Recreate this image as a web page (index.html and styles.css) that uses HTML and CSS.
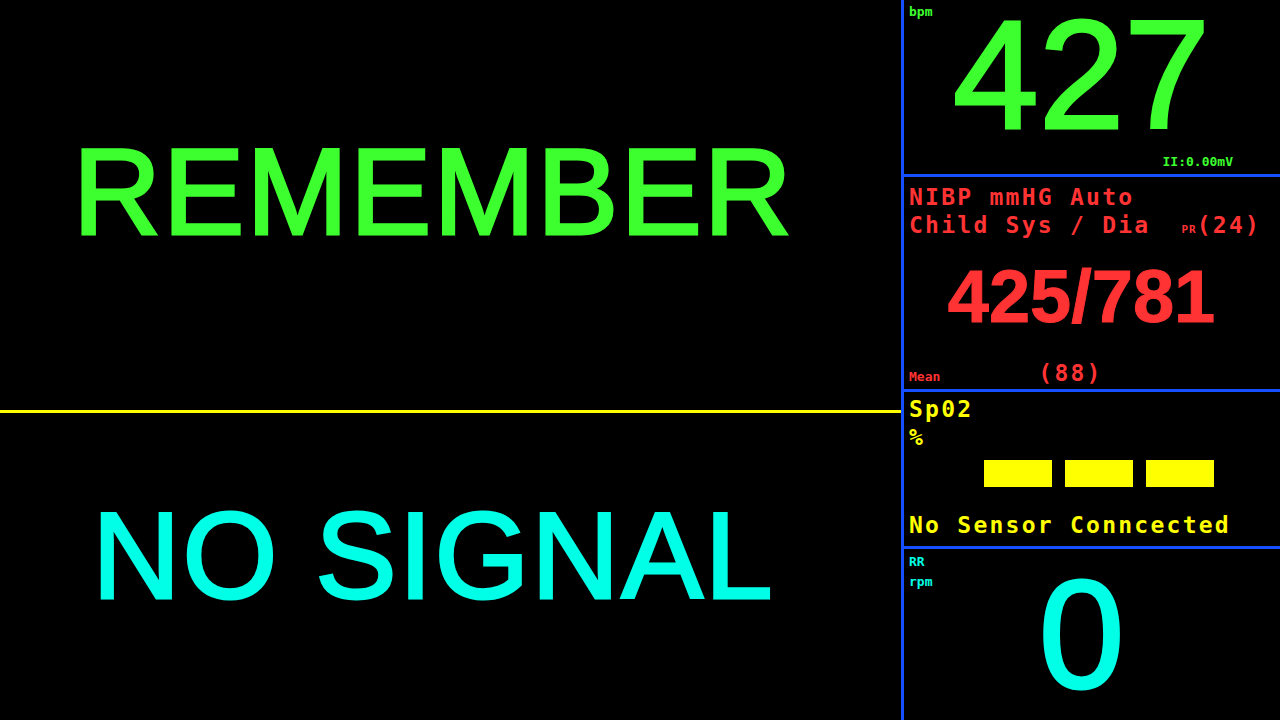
FILE: index.html
```html
<!DOCTYPE html>
<html lang="en">
<head>
<meta charset="utf-8">
<title>Patient Monitor</title>
<link rel="stylesheet" href="styles.css">
</head>
<body>
<div class="screen">
  <div class="main">
    <div class="half half-top"><span class="banner green">REMEMBER</span></div>
    <div class="half half-bottom"><span class="banner cyan">NO SIGNAL</span></div>
  </div>
  <div class="side">
    <section class="panel panel-hr green">
      <div class="tiny">bpm</div>
      <div class="huge value-hr">427</div>
      <div class="tiny foot">II:0.00mV</div>
    </section>
    <section class="panel panel-nibp red">
      <div class="mono-line">NIBP mmHG Auto</div>
      <div class="mono-line">Child Sys / Dia<span class="pr">PR</span>(24)</div>
      <div class="bp">425/781</div>
      <div class="mean-row">
        <span class="tiny">Mean</span>
        <span class="mono-line mean-val">(88)</span>
      </div>
    </section>
    <section class="panel panel-spo2 yellow">
      <div class="mono-line">Sp02</div>
      <div class="mono-line">%</div>
      <div class="bars">
        <span class="bar"></span><span class="bar"></span><span class="bar"></span>
      </div>
      <div class="mono-line sensor">No Sensor Conncected</div>
    </section>
    <section class="panel panel-rr cyan">
      <div class="rr-labels">
        <div class="tiny">RR</div>
        <div class="tiny">rpm</div>
      </div>
      <div class="huge value-rr">0</div>
    </section>
  </div>
</div>
</body>
</html>
```

FILE: styles.css
```css
html, body {
  margin: 0;
  padding: 0;
  background: #000;
}

.screen {
  width: 1280px;
  height: 720px;
  display: flex;
  background: #000;
  overflow: hidden;
}

.green { color: #3dff2f; }
.red { color: #ff3333; }
.cyan { color: #00ffe6; }
.yellow { color: #ffff00; }

/* left area */
.main {
  width: 901px;
  border-right: 3px solid #1450ff;
  display: flex;
  flex-direction: column;
}

.half {
  display: flex;
  align-items: center;
  justify-content: center;
  padding-right: 34px;
}

.half-top {
  box-sizing: border-box;
  height: 413px;
  padding-bottom: 26px;
  border-bottom: 3px solid #ffff00;
}

.half-bottom {
  flex: 1;
  padding-bottom: 21px;
}

.banner {
  font-family: "Liberation Sans", Arial, sans-serif;
  font-size: 122px;
  line-height: 122px;
  letter-spacing: 2px;
  -webkit-text-stroke: 3px currentColor;
  white-space: nowrap;
}

/* right column */
.side {
  width: 376px;
  display: flex;
  flex-direction: column;
}

.panel {
  box-sizing: border-box;
  padding: 0 6px 0 5px;
  border-bottom: 3px solid #1450ff;
}

.tiny {
  font-family: "DejaVu Sans Mono", "Liberation Mono", monospace;
  font-weight: bold;
  font-size: 13px;
  line-height: 20px;
}

.mono-line {
  font-family: "DejaVu Sans Mono", "Liberation Mono", monospace;
  font-weight: bold;
  font-size: 23px;
  line-height: 28px;
  letter-spacing: 2.25px;
  white-space: pre;
}

.huge {
  font-family: "Liberation Sans", Arial, sans-serif;
  font-size: 154px;
  text-align: center;
  padding-right: 20px;
  -webkit-text-stroke: 3px currentColor;
}

/* HR panel */
.panel-hr {
  height: 177px;
  padding-top: 4px;
  display: flex;
  flex-direction: column;
}

.panel-hr > .tiny:first-child {
  line-height: 16px;
}

.value-hr {
  line-height: 110px;
}

.foot {
  margin-top: auto;
  margin-bottom: 2px;
  align-self: flex-end;
  margin-right: 41px;
}

/* NIBP panel */
.panel-nibp {
  height: 215px;
  padding-top: 6px;
}

.pr {
  font-size: 11px;
  letter-spacing: 1px;
  margin-left: 31px;
}

.bp {
  font-family: "Liberation Sans", Arial, sans-serif;
  font-weight: bold;
  font-size: 74px;
  line-height: 105px;
  text-align: center;
  padding-right: 20px;
  -webkit-text-stroke: 1px currentColor;
}

.mean-row {
  display: flex;
  align-items: baseline;
  padding-top: 3px;
}

.mean-row .tiny {
  line-height: 42px;
}

.mean-val {
  line-height: 42px;
  margin-left: 98px;
}

/* SpO2 panel */
.panel-spo2 {
  height: 157px;
  padding-top: 3px;
}

.bars {
  display: flex;
  gap: 13px;
  margin: 9px 0 0 75px;
}

.bar {
  width: 68px;
  height: 27px;
  background: #ffff00;
}

.sensor {
  margin-top: 24px;
}

/* RR panel */
.panel-rr {
  flex: 1;
  border-bottom: none;
  padding-top: 3px;
  display: grid;
  grid-template-columns: 1fr;
  align-items: start;
}

.rr-labels,
.value-rr {
  grid-area: 1 / 1;
}

.value-rr {
  margin-top: 4px;
  line-height: 158px;
}
```
